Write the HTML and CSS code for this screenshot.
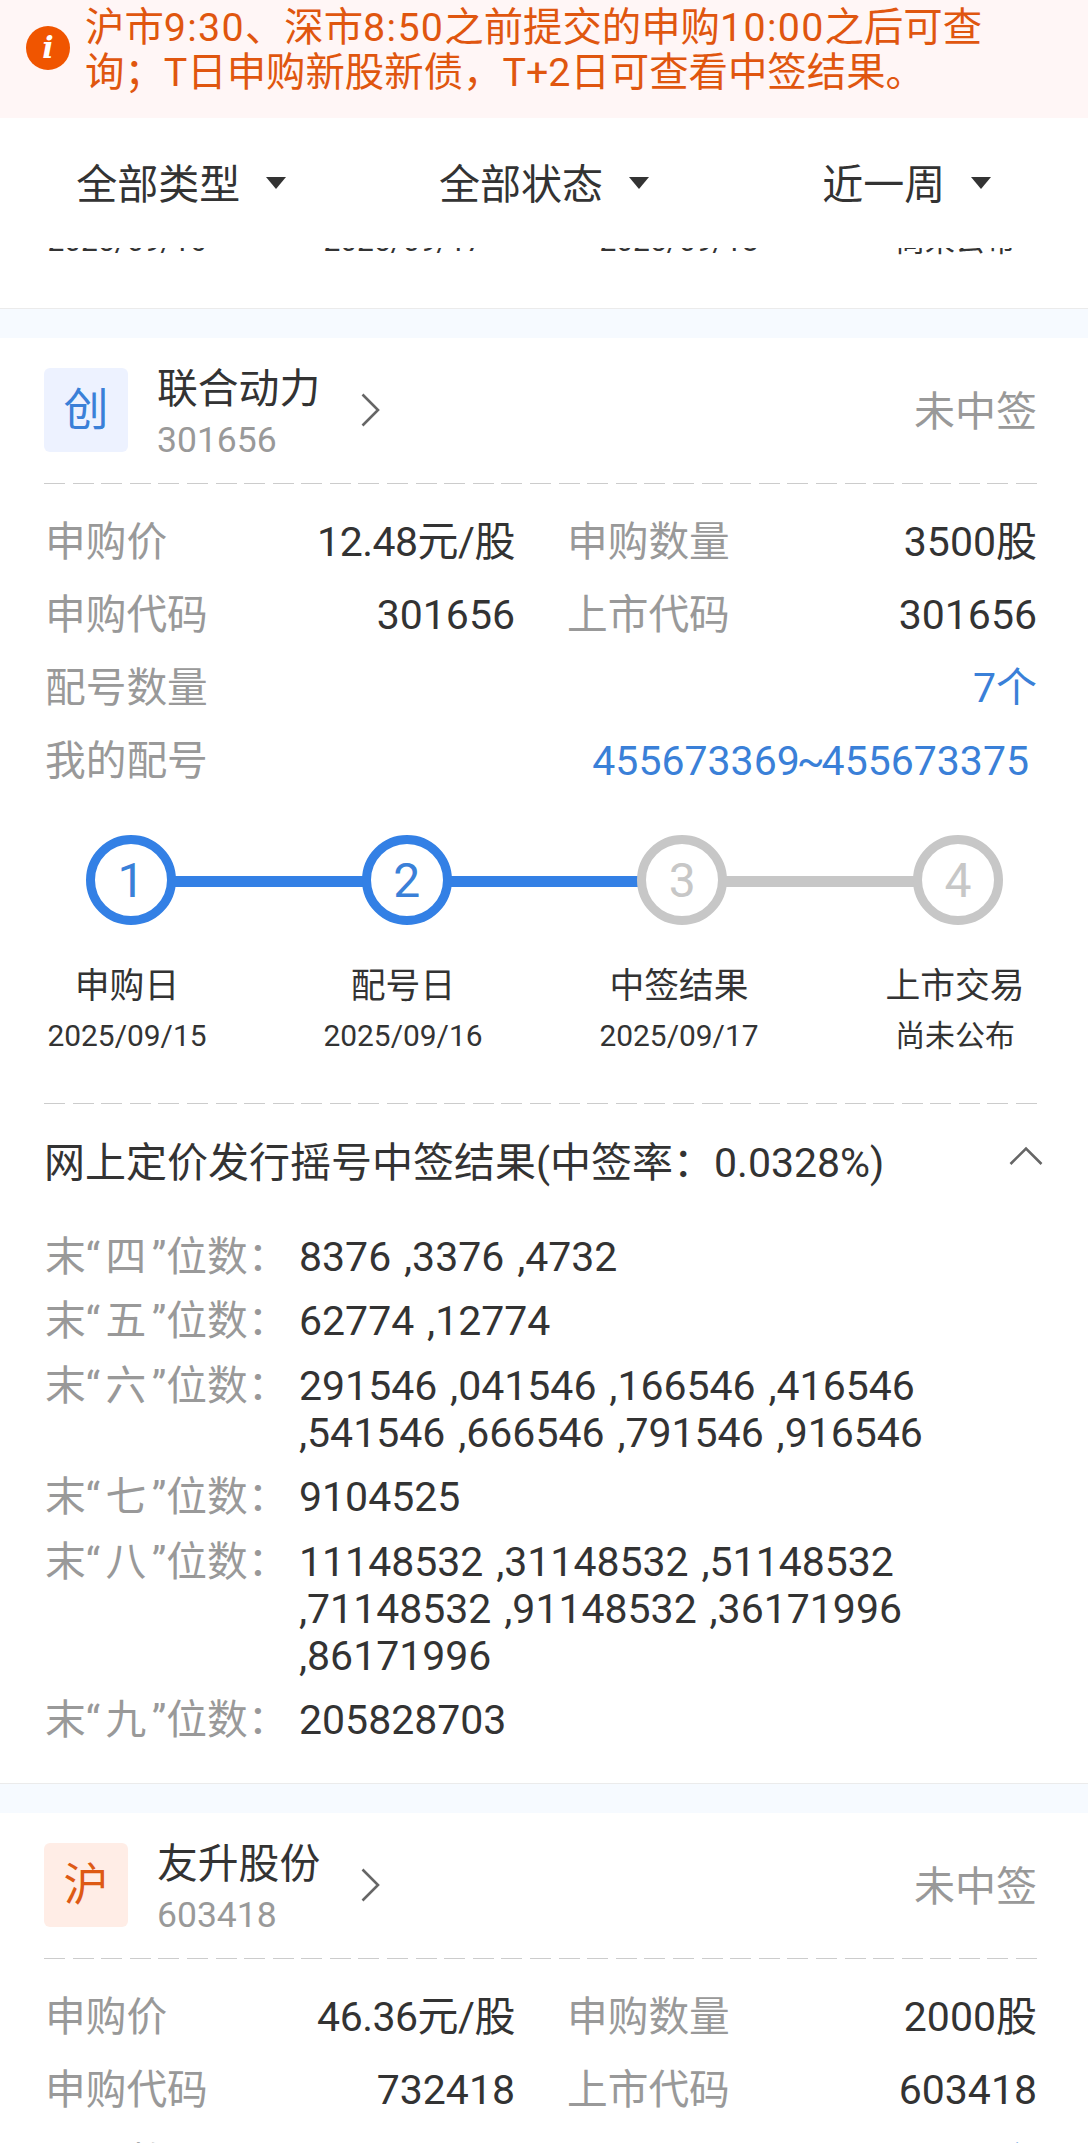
FILE: index.html
```html
<!DOCTYPE html>
<html lang="zh-CN">
<head>
    <meta charset="UTF-8">
    <meta name="viewport" content="width=device-width, initial-scale=1.0">
    <title>申购查询</title>
    <link rel="stylesheet" href="styles.css">
</head>
<body>

    <!-- Notice + filters stay above the scrolled list -->
    <div class="top">
        <div class="notice">
            <span class="notice-icon">i</span>
            <p>沪市<span class="time">9:30</span>、深市<span class="time">8:50</span>之前提交的申购<span class="time">10:00</span>之后可查<br>询；T日申购新股新债，T+2日可查看中签结果。</p>
        </div>
        <div class="filters">
            <div class="filter">全部类型<i class="arrow"></i></div>
            <div class="filter">全部状态<i class="arrow"></i></div>
            <div class="filter">近一周<i class="arrow"></i></div>
        </div>
    </div>

    <!-- Previous card, mostly scrolled away -->
    <div class="card scrolled">
        <div class="days">
            <div class="day"><span class="date">2025/09/16</span></div>
            <div class="day"><span class="date">2025/09/17</span></div>
            <div class="day"><span class="date">2025/09/18</span></div>
            <div class="day"><span class="date">尚未公布</span></div>
        </div>
    </div>

    <div class="card">
        <div class="card-head">
            <span class="tag tag-blue">创</span>
            <div class="stock">
                <div class="name">联合动力</div>
                <div class="code">301656</div>
            </div>
            <svg class="go" width="20" height="34" viewBox="0 0 20 34"><path d="M1.5 1.5L17 17L1.5 32.5" fill="none" stroke="#666" stroke-width="2.6"/></svg>
            <span class="status">未中签</span>
        </div>
        <div class="dash"></div>
        <div class="info">
            <div class="item"><span>申购价</span><b class="price">12.48元/股</b></div>
            <div class="item"><span>申购数量</span><b>3500股</b></div>
            <div class="item"><span>申购代码</span><b>301656</b></div>
            <div class="item"><span>上市代码</span><b>301656</b></div>
            <div class="item wide"><span>配号数量</span><b class="blue">7个</b></div>
            <div class="item wide"><span>我的配号</span><b class="blue numbers">455673369<i>~</i>455673375</b></div>
        </div>

        <div class="track">
            <span class="circle done">1</span>
            <span class="line done"></span>
            <span class="circle done">2</span>
            <span class="line done"></span>
            <span class="circle">3</span>
            <span class="line"></span>
            <span class="circle">4</span>
        </div>
        <div class="days">
            <div class="day"><span class="step">申购日</span><span class="date">2025/09/15</span></div>
            <div class="day"><span class="step">配号日</span><span class="date">2025/09/16</span></div>
            <div class="day"><span class="step">中签结果</span><span class="date">2025/09/17</span></div>
            <div class="day"><span class="step">上市交易</span><span class="date">尚未公布</span></div>
        </div>
        <div class="dash"></div>

        <div class="result-head">
            <span>网上定价发行摇号中签结果(中签率：0.0328%)</span>
            <svg width="34" height="20" viewBox="0 0 34 20"><path d="M1.5 18L17 2.5L32.5 18" fill="none" stroke="#666" stroke-width="2.6"/></svg>
        </div>
        <div class="results">
            <div class="result"><span class="label">末“<em>四</em>”位数：</span><span class="value">8376 ,3376 ,4732</span></div>
            <div class="result"><span class="label">末“<em>五</em>”位数：</span><span class="value">62774 ,12774</span></div>
            <div class="result"><span class="label">末“<em>六</em>”位数：</span><span class="value">291546 ,041546 ,166546 ,416546 ,541546 ,666546 ,791546 ,916546</span></div>
            <div class="result"><span class="label">末“<em>七</em>”位数：</span><span class="value">9104525</span></div>
            <div class="result"><span class="label">末“<em>八</em>”位数：</span><span class="value">11148532 ,31148532 ,51148532 ,71148532 ,91148532 ,36171996 ,86171996</span></div>
            <div class="result"><span class="label">末“<em>九</em>”位数：</span><span class="value">205828703</span></div>
        </div>
    </div>

    <div class="card">
        <div class="card-head">
            <span class="tag tag-orange">沪</span>
            <div class="stock">
                <div class="name">友升股份</div>
                <div class="code">603418</div>
            </div>
            <svg class="go" width="20" height="34" viewBox="0 0 20 34"><path d="M1.5 1.5L17 17L1.5 32.5" fill="none" stroke="#666" stroke-width="2.6"/></svg>
            <span class="status">未中签</span>
        </div>
        <div class="dash"></div>
        <div class="info">
            <div class="item"><span>申购价</span><b class="price">46.36元/股</b></div>
            <div class="item"><span>申购数量</span><b>2000股</b></div>
            <div class="item"><span>申购代码</span><b>732418</b></div>
            <div class="item"><span>上市代码</span><b>603418</b></div>
            <div class="item wide"><span>配号数量</span><b class="blue">4个</b></div>
        </div>
    </div>

</body>
</html>
```
FILE: styles.css
```css
* {
    margin: 0;
    padding: 0;
    box-sizing: border-box;
}

body {
    height: 2143px;
    overflow: hidden;
    background: #f6faff;
    font-family: Roboto, "Noto Sans CJK SC", sans-serif;
    font-size: 41px;
    color: #333;
}

.top {
    position: relative;
    z-index: 1;
}

.notice {
    display: flex;
    height: 118px;
    padding: 6px 0 0 26px;
    background: #fff6f6;
    color: #e0560f;
    font-size: 39.4px;
    line-height: 44.5px;
}

.notice .time {
    letter-spacing: 1.3px;
}

.notice-icon {
    width: 44px;
    height: 44px;
    margin: 20px 15px 0 0;
    border-radius: 50%;
    background: #f05500;
    color: white;
    font: italic bold 30px/43px "DejaVu Serif", serif;
    text-align: center;
}

.filters {
    display: flex;
    height: 130px;
    padding-bottom: 4px;
    background: white;
}

.filter {
    flex: 1;
    display: flex;
    justify-content: center;
    align-items: center;
}

.arrow {
    margin: 3px 0 0 26px;
    border: 10px solid transparent;
    border-top: 12px solid #333;
    border-bottom: 0;
}

/* Cards */
.card {
    margin-bottom: 29px;
    padding: 30px 51px 39px 44px;
    border-bottom: 1px solid #ebebeb;
    background: white;
}

.card.scrolled {
    height: 95px;
    margin-top: -34px;
    padding-top: 0;
}

.card-head {
    display: flex;
    height: 84px;
}

.tag {
    width: 84px;
    border-radius: 6px;
    font-size: 45px;
    line-height: 86px;
    text-align: center;
}

.tag-blue {
    background: #edf2ff;
    color: #3a80d8;
}

.tag-orange {
    background: #ffede6;
    color: #de5a14;
}

.stock {
    width: 233px;
    padding-left: 29px;
}

.name {
    font-size: 40.8px;
    line-height: 42px;
}

.code {
    margin-top: 9px;
    font-size: 35.5px;
    line-height: 42px;
    color: #999;
}

.go {
    margin-top: 25px;
}

.status {
    margin-left: auto;
    line-height: 89px;
    color: #999;
}

.dash {
    height: 1px;
    margin-top: 31px;
    background: repeating-linear-gradient(to right, #ccc 0 21px, transparent 21px 28.59px);
}

.info {
    display: grid;
    grid-template-columns: 470px 470px;
    column-gap: 52px;
    padding: 22px 0 0 1px;
}

.item {
    display: flex;
    justify-content: space-between;
    line-height: 73px;
    color: #999;
}

.item span {
    font-size: 40.7px;
}

.item b {
    font-weight: normal;
    color: #333;
}

.item .price {
    letter-spacing: -0.5px;
}

.item .blue {
    color: #3a80d8;
}

.item .numbers {
    margin-right: 8px;
}

.numbers i {
    margin: 0 -3px;
    font-style: normal;
}

.wide {
    grid-column: 1 / 3;
}

/* Progress */
.track {
    display: flex;
    align-items: center;
    margin-top: 37px;
    padding: 0 34px 0 42px;
}

.circle {
    width: 90px;
    height: 90px;
    border: 9px solid #c7c7c7;
    border-radius: 50%;
    font-size: 48px;
    line-height: 74px;
    text-align: center;
    color: #c7c7c7;
}

.line {
    flex: 1;
    height: 11px;
    margin: 2px -2px 0;
    background: #c7c7c7;
}

.circle.done {
    border-color: #3380e5;
    color: #3a80d8;
}

.line.done {
    background: #3380e5;
}

.days {
    display: flex;
    justify-content: space-between;
    margin: 38px 0 0 1px;
}

.scrolled .days {
    margin-top: 0;
}

.day {
    width: 164px;
    display: flex;
    flex-direction: column;
    align-items: center;
    white-space: nowrap;
}

.step {
    font-size: 34.8px;
    line-height: 46px;
}

.date {
    padding-top: 4px;
    font-size: 29.9px;
    line-height: 46px;
}

.days + .dash {
    margin-top: 44px;
}

/* Lottery results */
.result-head {
    display: flex;
    justify-content: space-between;
    align-items: center;
    height: 110px;
    margin-right: -6px;
}

.result-head svg {
    margin-bottom: 6px;
}

.results {
    display: flex;
    flex-direction: column;
    gap: 17.4px;
    padding: 20px 0 0 1px;
}

.result {
    display: flex;
    line-height: 47px;
}

.label {
    width: 254px;
    font-size: 40.7px;
    color: #999;
    white-space: nowrap;
}

.label em {
    margin: 0 5.5px;
    font-style: normal;
}

.value {
    flex: 1;
    word-spacing: 2.7px;
}
```
